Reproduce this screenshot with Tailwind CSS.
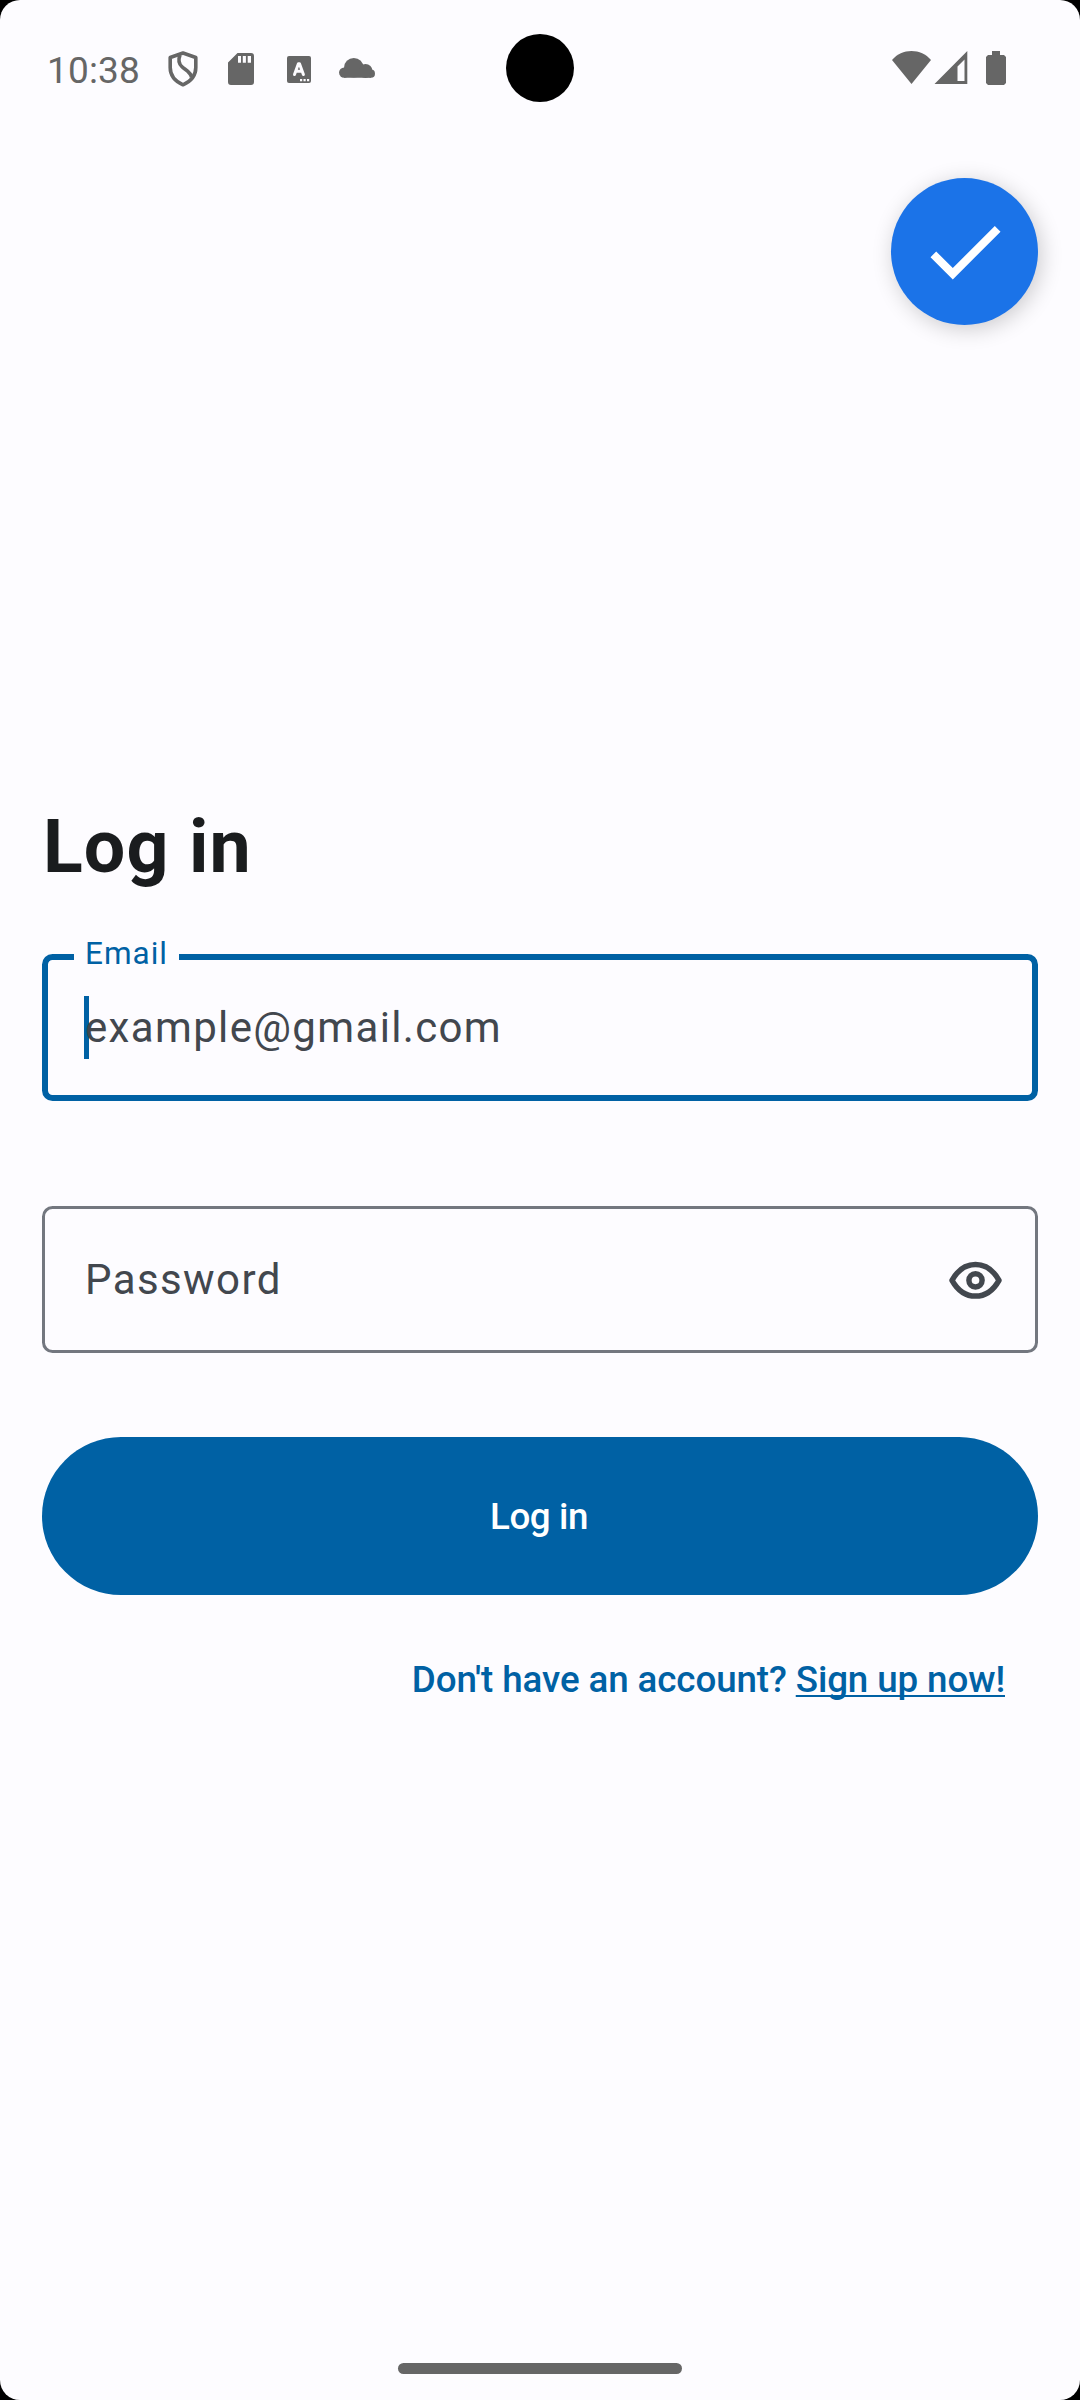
<!DOCTYPE html>
<html lang="en">
<head>
<meta charset="utf-8">
<title>Log in</title>
<script src="https://cdn.jsdelivr.net/npm/@tailwindcss/browser@4"></script>
</head>
<body class="bg-black">
<div class="flex h-[2400px] w-[1080px] flex-col overflow-hidden rounded-[20px] bg-[#fdfcff] font-['Roboto',sans-serif]">
  <!-- Status bar -->
  <header class="grid h-[136px] grid-cols-[1fr_68px_1fr] items-center text-[#666666]">
    <div class="flex items-center pl-[47px]">
      <span class="w-[121px] pt-[6px] text-[37px] leading-[44px] tracking-[0.15px]">10:38</span>
      <svg class="mt-[2px] h-[36px] w-[30px]" viewBox="0 0 30 36" fill="none" stroke="currentColor" stroke-width="3.6" stroke-linejoin="round"><path d="M15 2L27.800 6.500V16.500C27.800 24.500 22.500 30.500 15 33.800C7.500 30.500 2.200 24.500 2.200 16.500V6.500Z"/><path d="M12 4C10 9 10.500 12.500 14 15.800C17.500 19 23 21 23.500 26.500"/></svg>
      <svg class="ml-[30px] mt-[2px] h-[32px] w-[26px]" viewBox="0 0 26 32" fill="currentColor" fill-rule="evenodd"><path d="M9.500 0H23Q26 0 26 3V29Q26 32 23 32H3Q0 32 0 29V9.500ZM10 3V9.700H13V3ZM14.800 3V9.700H17.900V3ZM19.700 3V9.700H23V3Z"/></svg>
      <svg class="ml-[33px] mt-[2px] h-[27px] w-[24px]" viewBox="0 0 24 27"><rect width="24" height="27" rx="2" fill="currentColor"/><path d="M7.500 18.500L11.400 7.700H12.500L16.400 18.500M9 15.200H15" fill="none" stroke="#fdfcff" stroke-width="3" stroke-linecap="round" stroke-linejoin="round"/><path d="M13 23h2.200v2.200H13zM16.500 23h2.200v2.200h-2.200zM20 23h2.200v2.200H20z" fill="#fdfcff"/></svg>
      <svg class="ml-[28px] h-[20px] w-[36px]" viewBox="0 0 36 20" fill="currentColor"><circle cx="5.200" cy="14.600" r="5.200"/><circle cx="14.800" cy="9.800" r="9.800"/><circle cx="26.500" cy="13" r="7"/><circle cx="31.900" cy="15.700" r="4.100"/><path d="M5 11H30V15.700H32V19.800H5Z"/></svg>
    </div>
    <div class="size-[68px] rounded-full bg-black"></div>
    <div class="flex justify-end pr-[74px]">
      <svg class="h-[34px] w-[114px]" viewBox="0 0 114 34" fill="currentColor"><path d="M0 9C5 3 12 0 19.500 0S34 3 39 9L19.500 33Z"/><path fill-rule="evenodd" d="M75.300 0V33H42.500ZM72.500 8.500L65.500 15.500V30H72.500Z"/><path d="M100 0H108V4H112L114 6V32L112 34H96L94 32V6L96 4H100Z"/></svg>
    </div>
  </header>

  <main class="flex grow flex-col px-[42px] pt-[42px]">
    <button class="flex size-[147px] items-center justify-center self-end rounded-full bg-[#1b73e8] shadow-[3px_4px_22px_rgba(0,0,0,0.2)]" aria-label="Done">
      <svg class="size-[94px]" viewBox="0 0 94 94" fill="#fff"><path d="M12.500 52.200L18.200 46.500L34.800 63L76.800 21L82.500 26.700L34.800 74.400Z"/></svg>
    </button>

    <h1 class="mt-[473px] pl-px text-[73.5px] leading-[98px] font-bold tracking-[1.1px] text-[#1a1c1e]">Log in</h1>

    <div class="relative mt-[58px] flex h-[147px] items-center rounded-[10.5px] border-[6px] border-[#0061a4] px-[37px]">
      <label class="absolute top-[-27px] left-[26px] w-[105px] bg-[#fdfcff] pl-[11px] text-[31.5px] leading-[42px] tracking-[1px] text-[#0061a4]">Email</label>
      <span class="absolute top-[36px] left-[36px] h-[63px] w-[5px] bg-[#0061a4]"></span>
      <span class="relative text-[42px] leading-[63px] tracking-[1.35px] text-[#42474e]">example@gmail.com</span>
    </div>

    <div class="mt-[105px] flex h-[147px] items-center justify-between rounded-[10.5px] border-[3px] border-[#73777f] pr-[28px] pl-[40px]">
      <span class="text-[42px] leading-[63px] tracking-[1.4px] text-[#42474e]">Password</span>
      <svg class="h-[63px] w-[63px]" viewBox="0 0 63 63" fill="none" stroke="#42474e" stroke-width="5.500"><path stroke-linejoin="round" d="M8 32.300C13.500 22.500 21.500 16.600 31.500 16.600S49.500 22.500 55 32.300C49.500 42.100 41.500 48.100 31.500 48.100S13.500 42.100 8 32.300Z"/><circle cx="31.500" cy="32.300" r="6.600"/></svg>
    </div>

    <button class="mt-[84px] h-[158px] rounded-full bg-[#0061a4] pt-[2px] pr-[2px] text-[36.75px] leading-[52px] font-medium tracking-[-0.4px] text-white">Log in</button>

    <p class="mt-[59px] pr-[33px] text-right text-[36.75px] leading-[52px] font-medium tracking-[-0.11px] text-[#0061a4]">Don't have an account? <a class="underline decoration-[2px] underline-offset-[3px] [text-decoration-skip-ink:none]">Sign up now!</a></p>
  </main>

  <footer class="flex justify-center pb-[26px]"><div class="h-[11px] w-[284px] rounded-full bg-[#666666]"></div></footer>
</div>
</body>
</html>
